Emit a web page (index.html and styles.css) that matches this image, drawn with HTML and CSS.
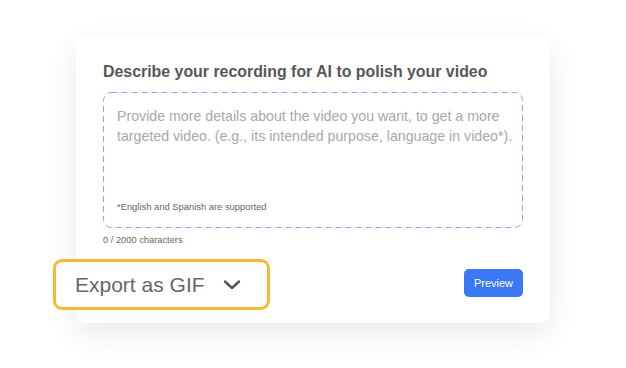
FILE: index.html
```html
<!DOCTYPE html>
<html lang="en">
<head>
    <meta charset="UTF-8">
    <meta name="viewport" content="width=device-width, initial-scale=1.0">
    <title>Describe your recording</title>
    <link rel="stylesheet" href="styles.css">
</head>
<body>
    <div class="card">
        <h2 class="card-title">Describe your recording for AI to polish your video</h2>
        <div class="prompt-box">
            <svg class="dash-border" width="420" height="136" viewBox="0 0 420 136">
                <rect x="0.5" y="0.5" width="419" height="135" rx="8" ry="8" fill="none" stroke="#85a8f4" stroke-width="1" stroke-dasharray="6 4"/>
            </svg>
            <p class="placeholder">Provide more details about the video you want, to get a more targeted video. (e.g., its intended purpose, language in video*).</p>
            <p class="note">*English and Spanish are supported</p>
        </div>
        <div class="counter">0 / 2000 characters</div>
        <div class="actions">
            <div class="export-select">
                <span>Export as GIF</span>
                <svg width="18" height="12" viewBox="0 0 18 12">
                    <path d="M2 2.5 L9 9 L16 2.5" fill="none" stroke="#555" stroke-width="2.4" stroke-linecap="round" stroke-linejoin="round"/>
                </svg>
            </div>
            <button class="preview-btn">Preview</button>
        </div>
    </div>
</body>
</html>
```

FILE: styles.css
```css
body {
    margin: 0;
    background: #fff;
    font-family: "Liberation Sans", Arial, sans-serif;
    height: 368px;
    overflow: hidden;
}

.card {
    width: 474px;
    box-sizing: border-box;
    margin: 36px 0 0 76px;
    padding: 27px 27px 0 27px;
    height: 287px;
    background: #fff;
    border-radius: 10px;
    box-shadow: 0 10px 30px rgba(0, 0, 0, 0.09);
}

.card-title {
    margin: 0;
    font-size: 15.9px;
    font-weight: bold;
    line-height: 18px;
    color: #575757;
}

.prompt-box {
    position: relative; /* holds the dashed border overlay */
    margin-top: 11px;
    height: 136px;
    box-sizing: border-box;
    padding: 14px 2px 0 14px;
    display: flex;
    flex-direction: column;
}

.dash-border {
    position: absolute;
    left: 0;
    top: 0;
}

.placeholder {
    margin: 0;
    font-size: 14.2px;
    line-height: 20px;
    color: #a8a8a8;
}

.note {
    margin: auto 0 16px 0;
    font-size: 9.4px;
    color: #666;
}

.counter {
    margin-top: 7px;
    font-size: 9.3px;
    color: #666;
}

.actions {
    margin-top: 14px;
    display: flex;
    justify-content: space-between;
    align-items: center;
}

.export-select {
    margin-left: -50px;
    width: 217px;
    height: 51px;
    box-sizing: border-box;
    border: 3px solid #f7b934;
    border-radius: 9px;
    background: #fff;
    display: flex;
    align-items: center;
    padding-left: 19px;
    gap: 18px;
}

.export-select span {
    font-size: 21px;
    color: #666;
}

.preview-btn {
    width: 59px;
    height: 28px;
    margin-bottom: 4px;
    border: none;
    border-radius: 5px;
    background: #3b78f6;
    color: #fff;
    font-family: "Liberation Sans", Arial, sans-serif;
    font-size: 11px;
    padding: 0;
}
```
